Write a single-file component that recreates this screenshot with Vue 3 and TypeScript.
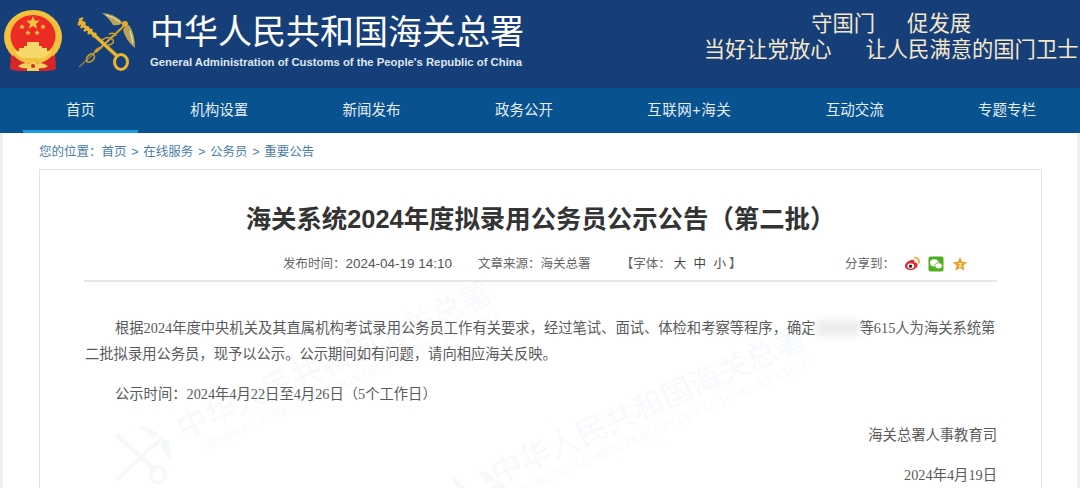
<script setup lang="ts">
const navItems = ['机构设置', '新闻发布', '政务公开', '互联网+海关', '互动交流', '专题专栏']
const crumbs = ['首页', '在线服务', '公务员', '重要公告']
</script>

<template>
  <div class="page">
    <header class="top">
      <div class="brand">
        <!-- national emblem -->
        <svg class="emblem" viewBox="0 0 60 64" width="60" height="64">
          <path d="M8 44 L7 60 L16 62 L44 62 L53 60 L52 44 Z" fill="#d6262a" />
          <ellipse cx="30" cy="28" rx="29" ry="27" fill="#f3c23c" />
          <ellipse cx="30" cy="27" rx="22.500" ry="21" fill="#ec2b24" />
          <path d="M30 7 L31.800 11.600 L36.700 11.800 L32.900 14.900 L34.200 19.700 L30 17 L25.800 19.700 L27.100 14.900 L23.300 11.800 L28.200 11.600 Z" fill="#f4c53f" />
          <path d="M19 15 l0.800 1.800 2 0.100 -1.500 1.300 0.500 2 -1.800 -1.100 -1.800 1.100 0.500 -2 -1.500 -1.300 2 -0.100 Z" fill="#f4c53f" />
          <path d="M40 15 l0.800 1.800 2 0.100 -1.500 1.300 0.500 2 -1.800 -1.100 -1.800 1.100 0.500 -2 -1.500 -1.300 2 -0.100 Z" fill="#f4c53f" />
          <path d="M25 21 l0.800 1.800 2 0.100 -1.500 1.300 0.500 2 -1.800 -1.100 -1.800 1.100 0.500 -2 -1.500 -1.300 2 -0.100 Z" fill="#f4c53f" />
          <path d="M34 21 l0.800 1.800 2 0.100 -1.500 1.300 0.500 2 -1.800 -1.100 -1.800 1.100 0.500 -2 -1.500 -1.300 2 -0.100 Z" fill="#f4c53f" />
          <path d="M24 33 H36 V37 H39 V39 H44 V42 H49 Q45 47 40 49 H20 Q15 47 11 42 H16 V39 H21 V37 H24 Z" fill="#f6d76a" />
          <path d="M10 46 Q16 52 22 54 L20 62 L9 61 Z M50 46 Q44 52 38 54 L40 62 L51 61 Z" fill="#d6262a" />
          <path d="M15 57 Q22 52 26 55 Q30 50 34 55 Q38 52 45 57 Q42 60 36 59 V62 H24 V59 Q18 60 15 57 Z" fill="#f3cf5c" />
          <circle cx="30" cy="57" r="2" fill="#d6262a" />
        </svg>
        <!-- customs key and caduceus -->
        <svg class="customs" viewBox="0 0 60 62" width="60" height="62">
          <path d="M3 55 L22 38" stroke="#8d7a4c" stroke-width="1.500" fill="none" />
          <path d="M20 40 L50 12" stroke="#d8a52a" stroke-width="2" fill="none" />
          <path d="M11 45 q4 -5 7 -2 q2 4 -4 7 q-5 1 -3 -5 M18 41 q3 -6 8 -5 M24 30 q8 -8 13 -2 q2 4 -5 5 M33 22 q6 -2 7 2" stroke="#cf9e24" stroke-width="1.500" fill="none" />
          <path d="M3 9 L41 44" stroke="#eab52b" stroke-width="3.500" fill="none" />
          <path d="M2 13 L7 9 M5 16 L9 10 M8 19 L13 15 M12 22 L16 17 M17 25 L20 21 M3 8 L7 6" stroke="#eab52b" stroke-width="2.500" fill="none" />
          <ellipse cx="45" cy="50" rx="6.500" ry="7.500" stroke="#eab52b" stroke-width="3" fill="none" />
          <circle cx="49" cy="12" r="3" fill="#e3aa26" />
          <path d="M47 11 Q38 1 26 1 Q33 6 37 13 Q42 14 47 11 Z" fill="#b9a458" />
          <path d="M53 13 Q59 22 59 36 Q50 29 47 18 Q49 14 53 13 Z" fill="#b9a458" />
          <path d="M30 3 Q38 5 44 10 M54 19 Q56 26 57 31" stroke="#f2eabd" stroke-width="1" fill="none" />
        </svg>
        <div class="brand-text">
          <div class="brand-cn">中华人民共和国海关总署</div>
          <div class="brand-en">General Administration of Customs of the People's Republic of China</div>
        </div>
      </div>
      <div class="slogan">
        <div class="slogan-line short"><span>守国门</span><span>促发展</span></div>
        <div class="slogan-line"><span>当好让党放心</span><span>让人民满意的国门卫士</span></div>
      </div>
    </header>

    <nav class="nav">
      <a class="nav-item home">首页</a>
      <template v-for="item in navItems" :key="item">
        <i class="nav-sep"></i>
        <a class="nav-item" :class="{ wide: item.includes('+') }">{{ item }}</a>
      </template>
    </nav>

    <main class="main">
      <div class="crumbs">
        您的位置：<template v-for="(c, i) in crumbs" :key="c"><span v-if="i" class="gt">&gt;</span><a>{{ c }}</a></template>
      </div>

      <article class="card">
        <!-- faint watermark behind the article -->
        <svg class="mark-logo l1" viewBox="0 0 60 62" width="60" height="62">
          <path d="M3 9 L41 44 M3 55 L50 12 M5 16 L9 10 M12 22 L16 17" stroke="#f6f9fc" stroke-width="4" fill="none" />
          <ellipse cx="45" cy="50" rx="7" ry="8" stroke="#f6f9fc" stroke-width="4" fill="none" />
          <path d="M47 11 Q38 1 26 1 Q33 6 37 13 Z M53 13 Q59 22 59 36 Q50 29 47 18 Z" fill="#f6f9fc" />
        </svg>
        <svg class="mark-logo l2" viewBox="0 0 60 62" width="60" height="62">
          <path d="M3 9 L41 44 M3 55 L50 12 M5 16 L9 10 M12 22 L16 17" stroke="#f6f9fc" stroke-width="4" fill="none" />
          <ellipse cx="45" cy="50" rx="7" ry="8" stroke="#f6f9fc" stroke-width="4" fill="none" />
          <path d="M47 11 Q38 1 26 1 Q33 6 37 13 Z M53 13 Q59 22 59 36 Q50 29 47 18 Z" fill="#f6f9fc" />
        </svg>
        <div class="mark m1"><b>中华人民共和国海关总署</b><small>GENERAL ADMINISTRATION OF CUSTOMS. P.R.CHINA</small></div>
        <div class="mark m2"><b>中华人民共和国海关总署</b><small>GENERAL ADMINISTRATION OF CUSTOMS. P.R.CHINA</small></div>

        <h1 class="title">海关系统2024年度拟录用公务员公示公告（第二批）</h1>

        <div class="meta">
          <span class="m-time">发布时间：<em>2024-04-19 14:10</em></span>
          <span class="m-source">文章来源：海关总署</span>
          <span class="m-font">【字体：<span class="sizes">大 中 小</span>】</span>
          <div class="share">
            <span>分享到：</span>
            <svg viewBox="0 0 16 16" width="16" height="16">
              <path d="M7 4 C10 3 11 5 10.500 6.500 C13 6.500 14 8 13.500 9.500 C12.800 12.500 9 14.500 5.500 14 C2.500 13.600 0.800 12 1 9.800 C1.200 7.500 4 4.800 7 4 Z" fill="#e5262c" />
              <ellipse cx="6.800" cy="10" rx="3.400" ry="2.800" fill="#fff" />
              <circle cx="6.500" cy="10.200" r="1.600" fill="#222" />
              <path d="M10 1.500 C13.500 1 16 4 14.800 7.500" stroke="#f0a01e" stroke-width="1.500" fill="none" />
            </svg>
            <svg viewBox="0 0 16 16" width="16" height="16">
              <rect x="0.500" y="0.500" width="15" height="15" rx="2" fill="#4fb01f" />
              <ellipse cx="6.300" cy="6.800" rx="4.300" ry="3.600" fill="#fff" />
              <ellipse cx="10.600" cy="9.800" rx="3.700" ry="3" fill="#fff" stroke="#4fb01f" stroke-width="0.700" />
            </svg>
            <svg viewBox="0 0 16 16" width="16" height="16">
              <path d="M8 1 L10.100 5.700 L15.200 6.200 L11.400 9.600 L12.500 14.700 L8 12.100 L3.500 14.700 L4.600 9.600 L0.800 6.200 L5.900 5.700 Z" fill="#f0a022" />
              <path d="M6.500 7.500 H9.500 L7 10.500 H9.800" stroke="#fff" stroke-width="1" fill="none" />
            </svg>
          </div>
        </div>

        <div class="body">
          <p class="indent">根据2024年度中央机关及其直属机构考试录用公务员工作有关要求，经过笔试、面试、体检和考察等程序，确定<span class="blurred"></span>等615人为海关系统第二批拟录用公务员，现予以公示。公示期间如有问题，请向相应海关反映。</p>
          <p class="indent gap">公示时间：2024年4月22日至4月26日（5个工作日）</p>
          <p class="right sign">海关总署人事教育司</p>
          <p class="right date">2024年4月19日</p>
        </div>
      </article>
    </main>
  </div>
</template>

<style>
html,
body {
  margin: 0;
  background: #fff;
}
</style>

<style scoped>
.page {
  width: 1080px;
  height: 488px;
  overflow: hidden;
  font-family: "Liberation Sans", "Noto Sans CJK SC", sans-serif;
}
.top {
  height: 88px;
  background: #163f7a;
  display: flex;
  justify-content: space-between;
  padding: 0 1.5px 0 3px;
  box-sizing: border-box;
}
.brand {
  display: flex;
  align-items: flex-start;
}
.emblem {
  margin-top: 9px;
}
.customs {
  margin: 12px 0 0 13px;
}
.brand-text {
  margin: 12px 0 0 14px;
}
.brand-cn {
  font-size: 34px;
  line-height: 40px;
  color: #fff;
  font-weight: 400;
  white-space: nowrap;
}
.brand-en {
  margin-top: 3px;
  font-size: 11.3px;
  line-height: 14px;
  font-weight: 700;
  color: #dfe6ee;
  white-space: nowrap;
}
.slogan {
  margin-top: 9px;
  font-size: 21.3px;
  line-height: 25.5px;
  color: #f5e7c8;
  font-family: "Noto Sans CJK SC", sans-serif;
}
.slogan-line {
  display: flex;
  justify-content: center;
  gap: 34px;
}
.slogan-line.short {
  gap: 32px;
}
.nav {
  height: 45px;
  background: #07528f;
  display: flex;
  align-items: stretch;
  padding-left: 23px;
  box-sizing: border-box;
}
.nav-item {
  padding: 0 47.2px;
  font-size: 14.5px;
  line-height: 44px;
  color: #e6eef5;
  white-space: nowrap;
}
.nav-item.wide {
  letter-spacing: 0.5px;
}
.nav-item.home {
  padding: 0 43px;
  margin-right: 5px;
  box-shadow: inset 0 -3px 0 #1a9be0;
}
.nav-sep {
  width: 1px;
  height: 12px;
  margin-top: 18px;
  background: #8aaecb;
}
.main {
  height: 355px;
  padding: 0 35px 0 36px;
  border-left: 3px solid #f0f0f0;
  border-right: 3px solid #f0f0f0;
}
.crumbs {
  height: 36px;
  line-height: 38px;
  font-size: 12.5px;
  color: #4a7ea8;
}
.gt {
  margin: 0 4.7px;
}
.card {
  position: relative;
  height: 400px;
  box-sizing: border-box;
  border: 1px solid #e2e2e2;
  padding: 0 44px;
  overflow: hidden;
  background: #fff;
}
.mark,
.mark-logo {
  position: absolute;
}
.mark {
  transform: rotate(-24deg);
  transform-origin: left top;
  color: #f7fafd;
  font-family: "Liberation Serif", "Noto Sans CJK SC", serif;
  white-space: nowrap;
}
.mark b {
  display: block;
  font-size: 31px;
  line-height: 34px;
  font-weight: 400;
}
.mark small {
  display: block;
  margin-left: 14px;
  font-size: 13px;
  line-height: 16px;
}
.l1 {
  left: 73px;
  top: 255px;
}
.l2 {
  left: 410px;
  top: 300px;
}
.m1 {
  left: 132px;
  top: 245px;
}
.m2 {
  left: 446px;
  top: 290px;
}
.title {
  position: relative;
  margin: 33px 0 0;
  font-size: 25.4px;
  line-height: 32px;
  font-weight: 700;
  color: #333;
  text-align: center;
  white-space: nowrap;
}
.meta {
  position: relative;
  height: 47px;
  box-sizing: border-box;
  padding: 19px 0 0 199px;
  line-height: 20px;
  border-bottom: 2px solid #e6e6e6;
  font-size: 12.5px;
  color: #666;
  display: flex;
  align-items: flex-start;
  white-space: nowrap;
}
.meta em {
  font-style: normal;
  font-size: 13.5px;
  color: #555;
}
.m-source {
  margin-left: 26px;
}
.m-font {
  margin-left: 30px;
}
.sizes {
  margin: 0 3px;
  color: #444;
  word-spacing: 4px;
}
.share {
  margin-left: auto;
  margin-right: 29px;
  display: flex;
  align-items: center;
  gap: 8px;
}
.share span {
  margin-right: 1px;
}
.body {
  position: relative;
  padding-left: 1px;
  font-family: "Liberation Serif", "Noto Sans CJK SC", serif;
  font-size: 14.3px;
  line-height: 26px;
  color: #5a5a5a;
}
.body p {
  margin: 0;
}
.body .indent {
  text-indent: 30px;
  margin-top: 33px;
}
.body .gap {
  margin-top: 14px;
}
.blurred {
  display: inline-block;
  width: 44px;
  height: 16px;
  vertical-align: -3px;
  background: #eee;
  filter: blur(3px);
}
.right {
  text-align: right;
}
.body .sign {
  margin-top: 15px;
}
.body .date {
  margin-top: 14px;
}
</style>
